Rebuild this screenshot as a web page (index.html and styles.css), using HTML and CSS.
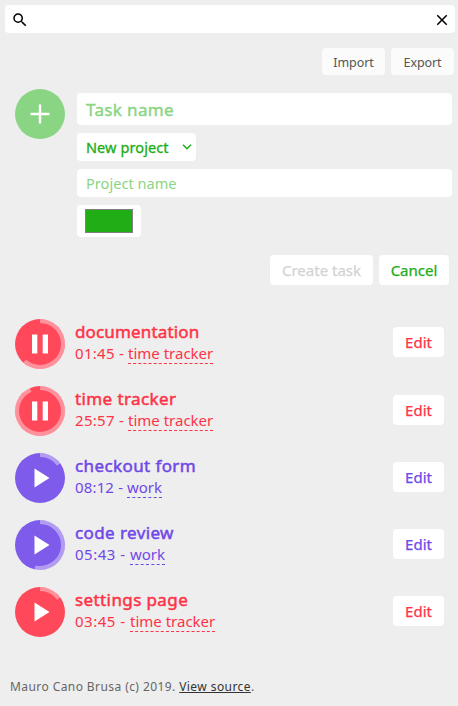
FILE: index.html
```html
<!DOCTYPE html>
<html lang="en">
<head>
<meta charset="utf-8">
<title>Time tracker</title>
<link rel="stylesheet" href="styles.css">
</head>
<body>
<div class="search">
  <svg width="18" height="18" viewBox="0 0 24 24"><path fill="#000" d="M15.500 14h-.79l-.28-.27A6.471 6.471 0 0 0 16 9.500 6.500 6.500 0 1 0 9.500 16c1.610 0 3.090-.59 4.230-1.570l.27.28v.79l5 4.990L20.490 19l-4.990-5zm-6 0C7.010 14 5 11.990 5 9.500S7.010 5 9.500 5 14 7.010 14 9.500 11.990 14 9.500 14z"/></svg>
  <svg width="18" height="18" viewBox="0 0 24 24"><path fill="#000" d="M19 6.410 17.590 5 12 10.590 6.410 5 5 6.410 10.590 12 5 17.590 6.410 19 12 13.410 17.590 19 19 17.590 13.410 12z"/></svg>
</div>
<div class="tools"><button class="tool">Import</button><button class="tool">Export</button></div>
<div class="form">
  <svg class="disc" viewBox="0 0 50 50"><circle cx="25" cy="25" r="25" fill="#89d583"/><path d="M25 15.500v19M15.500 25h19" stroke="#fff" stroke-width="2.400"/></svg>
  <div class="fields">
    <div class="field name">Task name</div>
    <div class="field select"><span>New project</span><svg width="10" height="8" viewBox="0 0 10 8"><path d="M1 1.700l4 4 4-4" fill="none" stroke="#20ad15" stroke-width="1.500"/></svg></div>
    <div class="field project">Project name</div>
    <div class="field color"><div class="swatch"></div></div>
  </div>
</div>
<div class="actions"><button class="btn disabled">Create task</button><button class="btn cancel">Cancel</button></div>
<main>
  <div class="task red">
    <svg class="disc" viewBox="0 0 50 50"><circle cx="25" cy="25" r="25" fill="currentColor"/><circle class="ring" cx="25" cy="25" r="23" pathLength="360" stroke-dasharray="222 360"/><path fill="#fff" d="M17 15.500h5.300v19H17zM27.700 15.500H33v19h-5.300z"/></svg>
    <div class="info"><div class="title tight">documentation</div><div class="meta"><span class="time">01:45 - </span><span class="link">time tracker</span></div></div>
    <button class="btn edit">Edit</button>
  </div>
  <div class="task red">
    <svg class="disc" viewBox="0 0 50 50"><circle cx="25" cy="25" r="25" fill="currentColor"/><circle class="ring" cx="25" cy="25" r="23" pathLength="360" stroke-dasharray="336 360"/><path fill="#fff" d="M17 15.500h5.300v19H17zM27.700 15.500H33v19h-5.300z"/></svg>
    <div class="info"><div class="title">time tracker</div><div class="meta"><span class="time">25:57 - </span><span class="link">time tracker</span></div></div>
    <button class="btn edit">Edit</button>
  </div>
  <div class="task purple">
    <svg class="disc" viewBox="0 0 50 50"><circle cx="25" cy="25" r="25" fill="currentColor"/><circle class="ring" cx="25" cy="25" r="23" pathLength="360" stroke-dasharray="54 360"/><path fill="#fff" d="M19.500 15.500v19L34.500 25z"/></svg>
    <div class="info"><div class="title">checkout form</div><div class="meta"><span class="time narrow">08:12 - </span><span class="link">work</span></div></div>
    <button class="btn edit">Edit</button>
  </div>
  <div class="task purple">
    <svg class="disc" viewBox="0 0 50 50"><circle cx="25" cy="25" r="25" fill="currentColor"/><circle class="ring" cx="25" cy="25" r="23" pathLength="360" stroke-dasharray="193 360"/><path fill="#fff" d="M19.500 15.500v19L34.500 25z"/></svg>
    <div class="info"><div class="title">code review</div><div class="meta"><span class="time wide">05:43 - </span><span class="link">work</span></div></div>
    <button class="btn edit">Edit</button>
  </div>
  <div class="task red">
    <svg class="disc" viewBox="0 0 50 50"><circle cx="25" cy="25" r="25" fill="currentColor"/><circle class="ring" cx="25" cy="25" r="23" pathLength="360" stroke-dasharray="54 360"/><path fill="#fff" d="M19.500 15.500v19L34.500 25z"/></svg>
    <div class="info"><div class="title">settings page</div><div class="meta"><span class="time wide">03:45 - </span><span class="link">time tracker</span></div></div>
    <button class="btn edit">Edit</button>
  </div>
</main>
<footer>Mauro Cano Brusa (c) 2019. <a>View source</a>.</footer>
</body>
</html>
```
FILE: styles.css
```css
* { box-sizing: border-box; }
body { margin: 0; padding: 5px 3px 0 5px; height: 706px; overflow: hidden; background: #eee; font-family: "Noto Sans", sans-serif; font-size: 15px; }
svg { display: block; flex: none; }
button { border: 0; padding: 0; font: inherit; color: inherit; white-space: nowrap; display: flex; align-items: center; justify-content: center; }
.search { width: 450px; height: 28px; background: #fff; border-radius: 4px; display: flex; justify-content: space-between; align-items: center; padding: 2px 4px 0 6px; }
.tools { display: flex; justify-content: flex-end; gap: 6px; margin: 15px 1px 0 0; color: #555; }
.tool { width: 63px; height: 27px; border-radius: 4px; background: #fbfbfb; padding-top: 1px; font-size: 12.5px; letter-spacing: -.1px; }
.form { display: flex; gap: 12px; margin: 14px 1px 0 10px; padding-right: 2px; }
.disc { width: 50px; height: 50px; overflow: visible; }
.fields { width: 375px; padding-top: 4px; display: flex; flex-direction: column; align-items: flex-start; gap: 8px; }
.field { background: #fff; border-radius: 4px; display: flex; align-items: center; padding: 0 9px; white-space: nowrap; }
.name { width: 375px; height: 32px; padding-top: 1px; font-size: 17px; letter-spacing: .35px; color: #89d583; -webkit-text-stroke: .4px; }
.select { width: 119px; height: 28px; color: #20ad15; font-size: 14.5px; letter-spacing: .1px; -webkit-text-stroke: .3px; justify-content: space-between; padding-right: 4px; }
.project { width: 375px; height: 28px; font-size: 14.5px; letter-spacing: .05px; color: #89d583; }
.color { width: 64px; height: 32px; padding: 0 8px; }
.swatch { width: 48px; height: 24px; background: #20ad15; border: 1px solid #808080; }
.actions { display: flex; justify-content: flex-end; gap: 6px; margin: 18px 6px 0 0; }
.btn { height: 30px; background: #fff; border-radius: 4px; -webkit-text-stroke: .25px; }
.disabled { width: 103px; color: #d3d3d3; }
.cancel { width: 70px; color: #20ad15; }
main { margin: 34px 0 0 10px; display: flex; flex-direction: column; gap: 17px; }
.task { display: flex; height: 50px; }
.red { color: #ff495b; }
.purple { color: #7e5bea; }
.red .info, .red .edit { color: #ff3347; }
.purple .info, .purple .edit { color: #7048e8; }
.ring { fill: none; stroke: #fff; stroke-opacity: .4; stroke-width: 4; transform: rotate(-90deg); transform-origin: 25px 25px; }
.info { margin-left: 10px; width: 318px; white-space: nowrap; }
.title { height: 24px; line-height: 26px; font-size: 17px; letter-spacing: .4px; -webkit-text-stroke: .5px; }
.title.tight { letter-spacing: .15px; }
.meta { height: 22px; line-height: 21px; display: flex; }
.time { white-space: pre; width: 53px; letter-spacing: .3px; }
.time.narrow { width: 52px; letter-spacing: .15px; }
.time.wide { width: 55px; letter-spacing: .5px; }
.link { height: 21px; border-bottom: 1px dashed currentColor; }
.edit { width: 51px; margin-top: 9px; }
.task:first-child .edit { margin-top: 8px; }
footer { margin: 41px 0 0 5px; font-size: 12px; line-height: 18px; letter-spacing: .42px; color: #666; white-space: nowrap; }
footer a { color: #333; text-decoration: underline; }
```
